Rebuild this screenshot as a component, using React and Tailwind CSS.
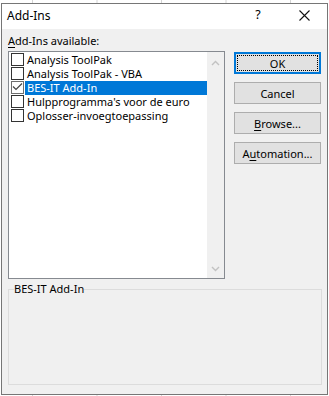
import React from 'react';

const items = [
  { label: 'Analysis ToolPak' },
  { label: 'Analysis ToolPak - VBA' },
  { label: 'BES-IT Add-In', checked: true, selected: true },
  { label: "Hulpprogramma's voor de euro" },
  { label: 'Oplosser-invoegtoepassing' },
];

function Checkbox({ checked }) {
  return (
    <div
      className={`w-[13px] h-[13px] shrink-0 border bg-white ${checked ? 'border-[#6e6e6e]' : 'border-[#333333]'}`}
    >
      {checked && (
        <svg width="11" height="11" viewBox="0 0 11 11" className="block">
          <path d="M1 4.5 L4 7.5 L10 1.5" fill="none" stroke="#444" strokeWidth="1.2" />
        </svg>
      )}
    </div>
  );
}

function Chevron({ up }) {
  return (
    <svg width="9" height="6" viewBox="0 0 9 6" className="block">
      <path
        d={up ? 'M1 5 L4.5 1.5 L8 5' : 'M1 1 L4.5 4.5 L8 1'}
        fill="none"
        stroke="#c2c2c2"
        strokeWidth="1.4"
      />
    </svg>
  );
}

function Button({ children, primary }) {
  if (primary) {
    return (
      <button className="w-[87px] h-[22px] bg-[#e1e1e1] border-2 border-[#0078d7] p-px flex">
        <span className="flex-1 border border-dotted border-black flex items-center justify-center leading-none">
          {children}
        </span>
      </button>
    );
  }
  return (
    <button className="w-[87px] h-[22px] bg-[#e1e1e1] border border-[#adadad] flex items-center justify-center leading-none">
      {children}
    </button>
  );
}

export default function App() {
  return (
    <div className="w-[329px] h-[396px] bg-white bg-[linear-gradient(to_right,#d4d4d4_1px,transparent_1px)] bg-[length:64.5px_100%] bg-[position:32px_0] pt-[3px] pl-[1px] overflow-hidden font-['Noto_Sans',sans-serif] text-[11px] text-black">
      <div className="w-[327px] h-[392px] border border-[#767676] flex flex-col">
        {/* title bar */}
        <div className="h-[25px] bg-white flex items-center">
          <span className="pl-[5px] flex-1 text-[12px] leading-none pb-[1px]">Add-Ins</span>
          <span className="w-[46px] text-center text-[12.5px] leading-none pb-[2px]">?</span>
          <span className="w-[46px] flex justify-center pb-[2px]">
            <svg width="11" height="11" viewBox="0 0 11 11" className="block">
              <path d="M0.5 0.5 L10.5 10.5 M10.5 0.5 L0.5 10.5" stroke="#111" strokeWidth="1.1" />
            </svg>
          </span>
        </div>

        {/* body */}
        <div className="flex-1 bg-[#f0f0f0] px-[6px] pt-[4px]">
          <div className="flex gap-[9px]">
            <div className="flex flex-col">
              <div className="leading-[16px] mb-[2px]">
                <span className="underline underline-offset-[2px]">A</span>dd-Ins available:
              </div>
              <div className="w-[217px] h-[228px] border border-[#868a90] bg-white flex">
                <div className="flex-1 flex flex-col pt-[1px]">
                  {items.map((it) => (
                    <div key={it.label} className="h-[14px] flex items-start pl-[2px]">
                      <Checkbox checked={it.checked} />
                      <div
                        className={`flex-1 h-[14px] leading-[14px] pl-[2px] ml-px ${it.selected ? 'bg-[#0078d7] text-white' : ''}`}
                      >
                        {it.label}
                      </div>
                    </div>
                  ))}
                </div>
                <div className="w-[17px] bg-[#f0f0f0] flex flex-col justify-between items-center pt-[8px] pb-[6px]">
                  <Chevron up />
                  <Chevron />
                </div>
              </div>
            </div>

            <div className="flex flex-col gap-[8px] pt-[19px]">
              <Button primary>OK</Button>
              <Button>Cancel</Button>
              <Button>
                <span>
                  <span className="underline underline-offset-[2px]">B</span>rowse...
                </span>
              </Button>
              <Button>
                <span>
                  A<span className="underline underline-offset-[2px]">u</span>tomation...
                </span>
              </Button>
            </div>
          </div>

          <div className="relative mt-[10px] w-[314px] h-[96px] border border-[#dcdcdc]">
            <span className="absolute left-[5px] -top-[9px] leading-[16px] bg-[#f0f0f0]">BES-IT Add-In</span>
          </div>
        </div>
      </div>
    </div>
  );
}
